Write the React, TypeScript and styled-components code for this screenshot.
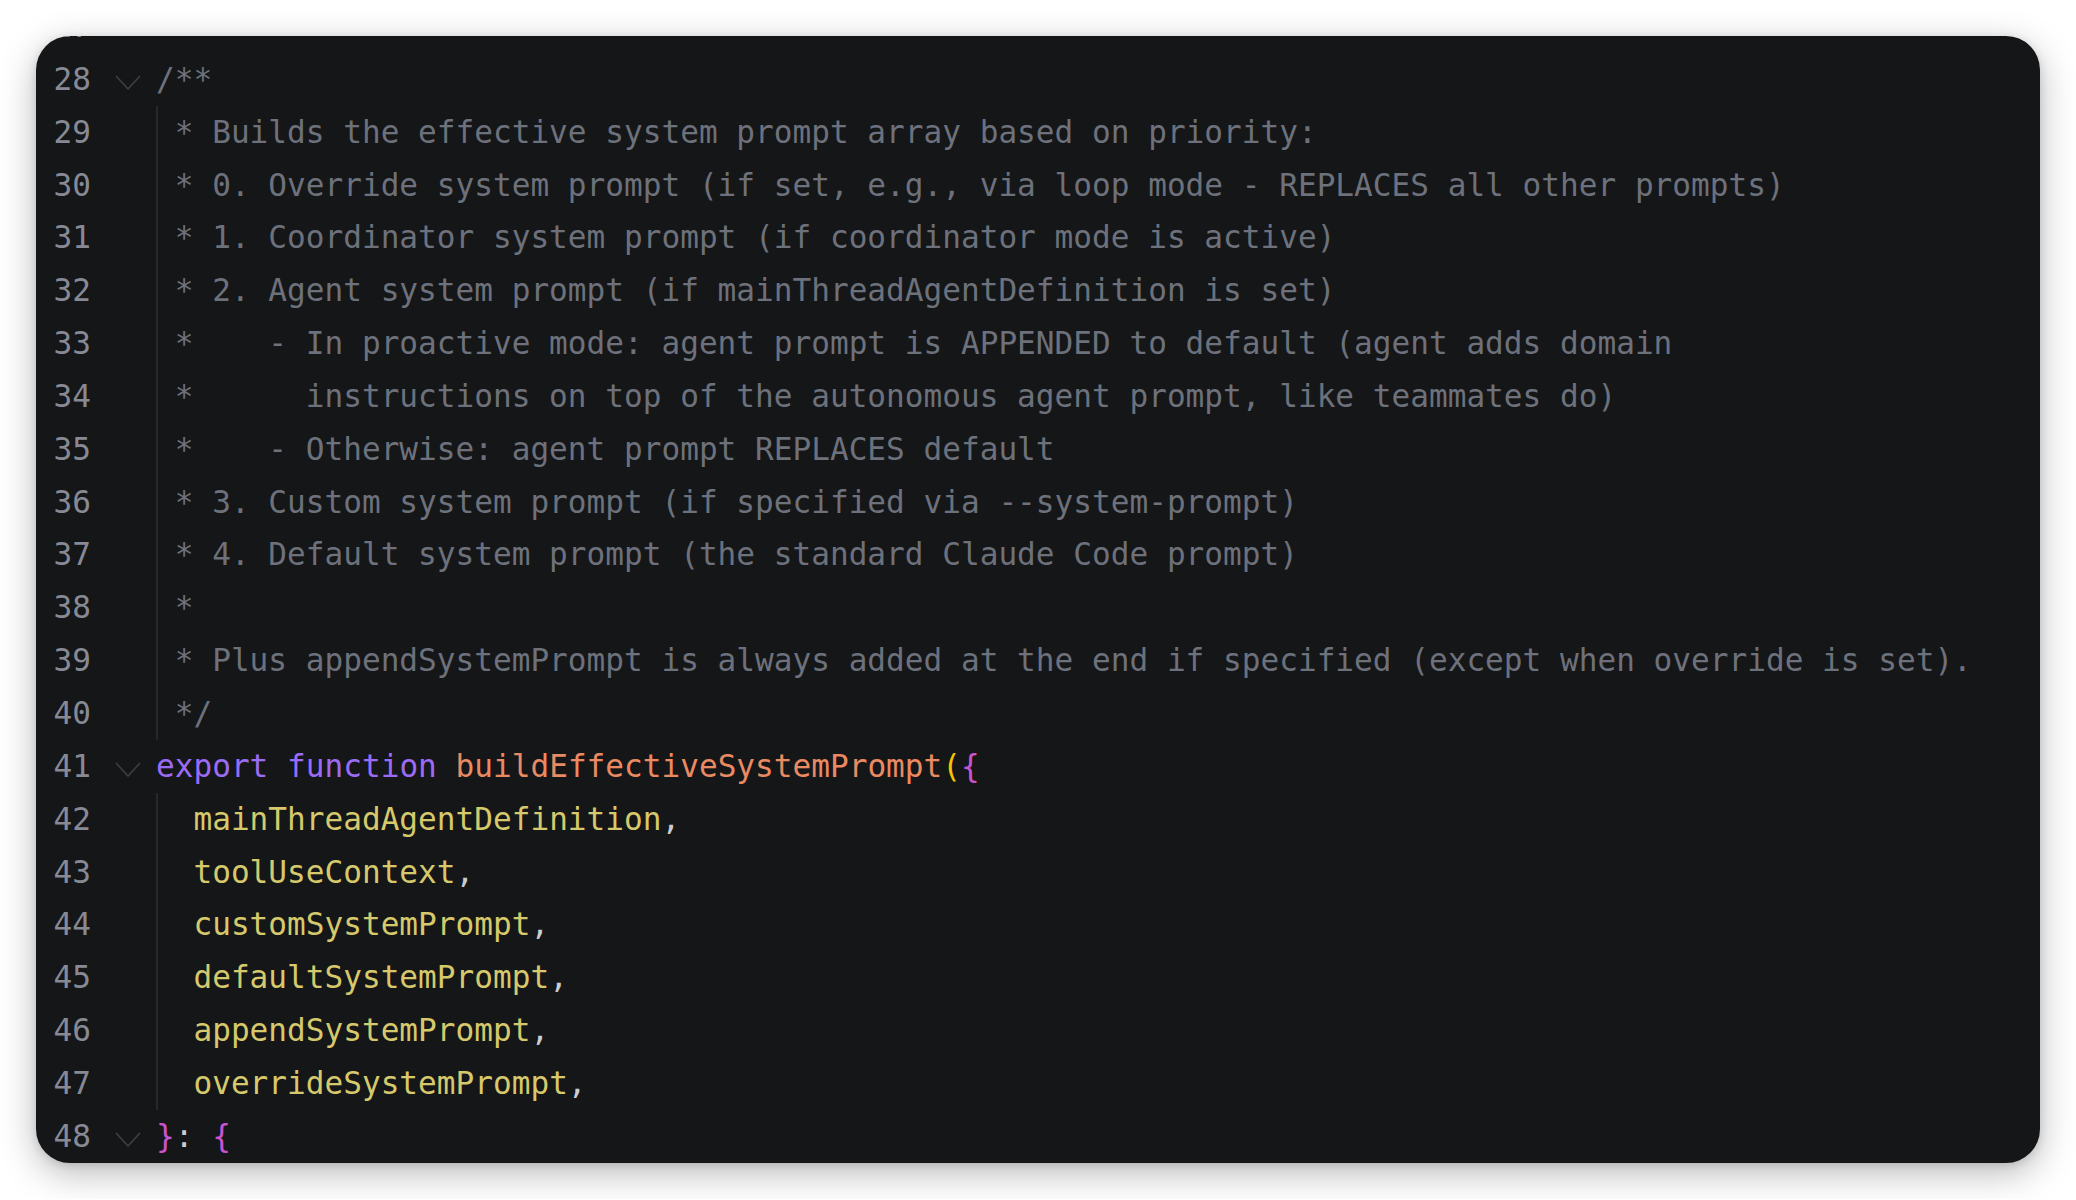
import React from "react";
import styled, { createGlobalStyle } from "styled-components";

const GlobalStyle = createGlobalStyle`
  html, body {
    margin: 0;
    padding: 0;
    background: #ffffff;
  }
  body {
    font-family: "DejaVu Sans Mono", "Liberation Mono", monospace;
  }
`;

const Page = styled.div`
  padding: 36px 36px 36px 36px;
  box-sizing: border-box;
  width: 2076px;
`;

const Card = styled.div`
  background: #151618;
  border-radius: 34px;
  overflow: hidden;
  box-shadow: 0 10px 36px rgba(0, 0, 0, 0.28), 0 2px 8px rgba(0, 0, 0, 0.12);
`;

const Lines = styled.div`
  display: flex;
  flex-direction: column;
  margin-top: -36px;
  font-family: "DejaVu Sans Mono", "Liberation Mono", monospace;
  font-size: 31.1px;
  line-height: 52.85px;
`;

const Row = styled.div`
  display: grid;
  grid-template-columns: 55px 65px 1fr;
  height: 52.85px;
`;

const LineNo = styled.div`
  text-align: right;
  color: #878a94;
`;

const Fold = styled.div`
  display: flex;
  justify-content: center;
  align-items: flex-start;
  padding-left: 8px;
  box-sizing: border-box;
`;

const Chevron = styled.svg`
  margin-top: 22px;
  width: 26px;
  height: 16px;
`;

const Code = styled.div<{ $guide?: boolean }>`
  white-space: pre;
  color: #d4d7dd;
  box-shadow: ${(p) => (p.$guide ? "inset 2px 0 0 #26282c" : "none")};
`;

const Comment = styled.span`
  color: #6d717b;
`;
const Keyword = styled.span`
  color: #9b6cf3;
`;
const FnName = styled.span`
  color: #ea8a62;
`;
const Paren = styled.span`
  color: #f5c400;
`;
const Brace = styled.span`
  color: #c954d0;
`;
const Param = styled.span`
  color: #d6c96c;
`;
const Punct = styled.span`
  color: #c9cdd4;
`;

const FoldIcon = () => (
  <Chevron viewBox="0 0 26 16">
    <polyline
      points="1.5,1.5 13,14 24.5,1.5"
      fill="none"
      stroke="#3a3d44"
      strokeWidth="1.8"
      strokeLinecap="round"
      strokeLinejoin="round"
    />
  </Chevron>
);

type Line = {
  n: number;
  fold?: boolean;
  guide?: boolean;
  content: React.ReactNode;
};

const comment = (t: string) => <Comment>{t}</Comment>;
const param = (t: string) => (
  <>
    {"  "}
    <Param>{t}</Param>
    <Punct>,</Punct>
  </>
);

const lines: Line[] = [
  { n: 27, content: "" },
  { n: 28, fold: true, content: comment("/**") },
  { n: 29, guide: true, content: comment(" * Builds the effective system prompt array based on priority:") },
  {
    n: 30,
    guide: true,
    content: comment(
      " * 0. Override system prompt (if set, e.g., via loop mode - REPLACES all other prompts)"
    ),
  },
  { n: 31, guide: true, content: comment(" * 1. Coordinator system prompt (if coordinator mode is active)") },
  { n: 32, guide: true, content: comment(" * 2. Agent system prompt (if mainThreadAgentDefinition is set)") },
  {
    n: 33,
    guide: true,
    content: comment(" *    - In proactive mode: agent prompt is APPENDED to default (agent adds domain"),
  },
  {
    n: 34,
    guide: true,
    content: comment(" *      instructions on top of the autonomous agent prompt, like teammates do)"),
  },
  { n: 35, guide: true, content: comment(" *    - Otherwise: agent prompt REPLACES default") },
  { n: 36, guide: true, content: comment(" * 3. Custom system prompt (if specified via --system-prompt)") },
  { n: 37, guide: true, content: comment(" * 4. Default system prompt (the standard Claude Code prompt)") },
  { n: 38, guide: true, content: comment(" *") },
  {
    n: 39,
    guide: true,
    content: comment(
      " * Plus appendSystemPrompt is always added at the end if specified (except when override is set)."
    ),
  },
  { n: 40, guide: true, content: comment(" */") },
  {
    n: 41,
    fold: true,
    content: (
      <>
        <Keyword>export</Keyword> <Keyword>function</Keyword> <FnName>buildEffectiveSystemPrompt</FnName>
        <Paren>(</Paren>
        <Brace>{"{"}</Brace>
      </>
    ),
  },
  { n: 42, guide: true, content: param("mainThreadAgentDefinition") },
  { n: 43, guide: true, content: param("toolUseContext") },
  { n: 44, guide: true, content: param("customSystemPrompt") },
  { n: 45, guide: true, content: param("defaultSystemPrompt") },
  { n: 46, guide: true, content: param("appendSystemPrompt") },
  { n: 47, guide: true, content: param("overrideSystemPrompt") },
  {
    n: 48,
    fold: true,
    content: (
      <>
        <Brace>{"}"}</Brace>
        <Punct>:</Punct> <Brace>{"{"}</Brace>
      </>
    ),
  },
];

export default function App() {
  return (
    <>
      <GlobalStyle />
      <Page>
        <Card>
          <Lines>
            {lines.map((l) => (
              <Row key={l.n}>
                <LineNo>{l.n}</LineNo>
                <Fold>{l.fold ? <FoldIcon /> : null}</Fold>
                <Code $guide={l.guide}>{l.content}</Code>
              </Row>
            ))}
          </Lines>
        </Card>
      </Page>
    </>
  );
}
